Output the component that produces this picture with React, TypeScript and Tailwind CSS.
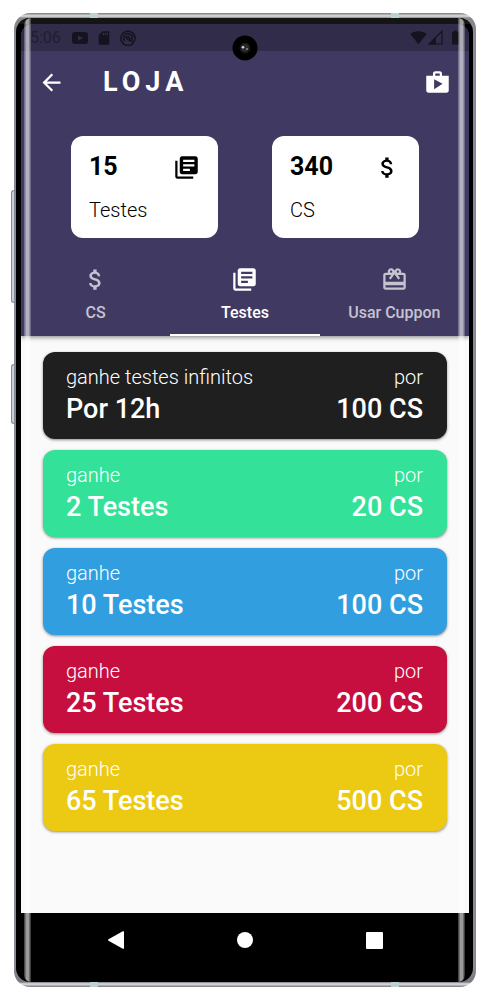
import React from "react";
import {
  MdArrowBack,
  MdAttachMoney,
  MdBatteryFull,
  MdCardGiftcard,
  MdLibraryBooks,
  MdSdCard,
  MdShop,
  MdSignalWifi4Bar,
} from "react-icons/md";

type Offer = { label: string; title: string; price: string; color: string };

const offers: Offer[] = [
  { label: "ganhe testes infinitos", title: "Por 12h", price: "100 CS", color: "bg-[#1f1f1f]" },
  { label: "ganhe", title: "2 Testes", price: "20 CS", color: "bg-[#33e198]" },
  { label: "ganhe", title: "10 Testes", price: "100 CS", color: "bg-[#319edf]" },
  { label: "ganhe", title: "25 Testes", price: "200 CS", color: "bg-[#c60f3f]" },
  { label: "ganhe", title: "65 Testes", price: "500 CS", color: "bg-[#ecc913]" },
];

function StatusBar() {
  return (
    <div className="flex h-[27px] items-center justify-between bg-[#302c49] pl-[9px] pr-[5px] text-[#15131f]">
      <div className="flex items-center">
        <span className="text-base leading-none text-[#211e31]">5:06</span>
        <svg className="ml-[11px] h-3 w-4" viewBox="0 0 16 12" aria-hidden="true">
          <rect width="16" height="12" rx="3" fill="currentColor" />
          <path d="M6 3.5 11 6 6 8.5z" fill="#302c49" />
        </svg>
        <MdSdCard className="ml-2 size-4" />
        <svg className="ml-2 size-4" viewBox="0 0 16 16" fill="none" stroke="currentColor" aria-hidden="true">
          <path d="M13.2 13.2A7.1 7.1 0 1 1 15.1 8c0 1.600-.5 3-1.300 4" strokeWidth="1.500" />
          <path d="M4.900 11A4.300 4.300 0 1 1 12 9.500" strokeWidth="1.500" />
          <path d="M5.500 7.500 8 6.500l5.500 6.500M5.500 7.500l5 4" strokeWidth="1.500" />
        </svg>
      </div>
      <div className="flex items-center">
        <MdSignalWifi4Bar className="size-[17px]" />
        <svg className="ml-px size-[15px]" viewBox="0 0 15 15" aria-hidden="true">
          <path d="M14 1v13H1z" fill="none" stroke="currentColor" strokeWidth="1.200" />
          <path d="M8 7v7.500H.5z" fill="currentColor" />
        </svg>
        <MdBatteryFull className="ml-1 size-[17px]" />
      </div>
    </div>
  );
}

function Stat({ value, label, icon }: { value: string; label: string; icon: React.ReactNode }) {
  return (
    <div className="flex h-[102px] flex-1 flex-col justify-between rounded-xl bg-white px-[18px] pb-4 pt-[17px] text-black">
      <div className="flex items-center justify-between">
        <strong className="text-[25px] font-bold leading-7">{value}</strong>
        {icon}
      </div>
      <span className="text-xl font-light leading-6">{label}</span>
    </div>
  );
}

function Tab({ label, icon, active = false }: { label: string; icon: React.ReactNode; active?: boolean }) {
  return (
    <button
      type="button"
      role="tab"
      aria-selected={active}
      className={
        active
          ? "flex flex-col items-center gap-[10px] border-b-2 border-white pb-[11px] pt-3 text-white"
          : "flex flex-col items-center gap-[10px] border-b-2 border-transparent pb-[11px] pt-3 text-[#c5c3cf]"
      }
    >
      {icon}
      <span className="whitespace-nowrap text-base font-medium leading-5">{label}</span>
    </button>
  );
}

function OfferCard({ label, title, price, color }: Offer) {
  return (
    <button
      type="button"
      className={`flex h-[87px] w-full items-start justify-between rounded-xl pl-[23px] pr-6 pt-3 text-white shadow-[0_1px_3px_rgba(0,0,0,0.45)] ${color}`}
    >
      <span className="flex flex-col items-start">
        <span className="text-xl font-light leading-[26px]">{label}</span>
        <span className="text-[27px] font-medium leading-[38px]">{title}</span>
      </span>
      <span className="flex flex-col items-end">
        <span className="text-xl font-light leading-[26px]">por</span>
        <span className="text-[27px] font-medium leading-[38px]">{price}</span>
      </span>
    </button>
  );
}

function Camera() {
  return (
    <svg className="absolute left-1/2 top-[22px] size-[26px] -translate-x-1/2" viewBox="0 0 26 26" aria-hidden="true">
      <circle cx="13" cy="13" r="12.500" fill="#000" />
      <circle cx="13" cy="13" r="5.500" fill="#141414" />
      <circle cx="13" cy="13" r="4" fill="#2a2a2a" />
      <circle cx="11" cy="12.300" r="1.300" fill="#d4d4d4" />
      <circle cx="15" cy="14" r="1" fill="#8a8a8a" />
    </svg>
  );
}

export default function App() {
  return (
    <main className="flex min-h-screen flex-col bg-white py-[13px] pl-[14px] pr-[11px] font-['Roboto',sans-serif]">
      <div className="relative flex grow flex-col rounded-2xl bg-[linear-gradient(to_bottom,#77797c_0px,#e2e2e2_3px,#85878b_5px,#858a94_20px,#858a94_calc(100%-20px),#777a80_calc(100%-5px),#e4e5e7_calc(100%-3px),#73767c_100%)] py-[5px] pl-[2px] pr-[3px]">
        <div className="absolute left-[-3px] top-[177px] h-[113px] w-[3px] rounded-l-sm border border-r-0 border-[#85898e] bg-[#c8d0d5]" />
        <div className="absolute left-[-3px] top-[351px] h-[60px] w-[3px] rounded-l-sm border border-r-0 border-[#85898e] bg-[#c8d0d5]" />
        <div className="absolute left-[76px] top-0 h-[5px] w-2 bg-[#bdd0d3]" />
        <div className="absolute right-[77px] top-0 h-[5px] w-2 bg-[#bdd0d3]" />
        <div className="absolute bottom-0 left-[76px] h-[5px] w-2 bg-[#bdd0d3]" />
        <div className="absolute bottom-0 right-[77px] h-[5px] w-2 bg-[#bdd0d3]" />

        <div className="flex grow flex-col overflow-hidden rounded-[14px] bg-black pl-[5px] pr-1">
          <div className="-ml-[5px] -mr-1 h-[6px] bg-[#151515]" />
          <div className="flex grow flex-col overflow-hidden rounded-t-xl">
            <header className="relative bg-[#403a63] shadow-[0_1px_5px_rgba(0,0,0,0.5)]">
              <StatusBar />
              <div className="flex h-[62px] items-center pl-[17px] pr-[18px] text-white">
                <button type="button" aria-label="Voltar">
                  <MdArrowBack className="size-[27px]" />
                </button>
                <h1 className="ml-[38px] grow text-[27px] font-bold leading-8 tracking-[5px]">LOJA</h1>
                <button type="button" aria-label="Compras">
                  <MdShop className="size-[27px]" />
                </button>
              </div>
              <section className="flex gap-[54px] px-[50px] pt-[23px]">
                <Stat value="15" label="Testes" icon={<MdLibraryBooks className="size-[27px]" />} />
                <Stat value="340" label="CS" icon={<MdAttachMoney className="size-[27px]" />} />
              </section>
              <div role="tablist" className="grid grid-cols-3 pt-4">
                <Tab label="CS" icon={<MdAttachMoney className="size-[27px]" />} />
                <Tab label="Testes" icon={<MdLibraryBooks className="size-[27px]" />} active />
                <Tab label="Usar Cuppon" icon={<MdCardGiftcard className="size-[27px]" />} />
              </div>
            </header>
            <section className="flex grow flex-col gap-[11px] bg-[#fafafa] px-[22px] pt-4">
              {offers.map((offer) => (
                <OfferCard key={offer.title} {...offer} />
              ))}
            </section>
          </div>
          <nav className="flex h-[69px] items-center justify-center gap-[113px] pb-[15px] text-white">
            <button type="button" aria-label="Voltar">
              <svg className="h-[18px] w-4" viewBox="0 0 16 18" fill="currentColor" aria-hidden="true">
                <path d="M.5 8.300 14.800.3q1.200-.5 1.200.7v16q0 1.200-1.200.7L.5 9.700q-.8-.7 0-1.400z" />
              </svg>
            </button>
            <button type="button" aria-label="Início" className="size-4 rounded-full bg-white" />
            <button type="button" aria-label="Recentes" className="size-[17px] rounded-[1px] bg-white" />
          </nav>
        </div>

        <div className="pointer-events-none absolute bottom-[5px] left-[10px] top-[5px] w-[7px] rounded-tl-lg rounded-bl-lg bg-[linear-gradient(to_right,rgba(255,255,255,0.2),rgba(255,255,255,0.6)_35%,rgba(255,255,255,0.6)_65%,rgba(255,255,255,0.15))]" />
        <div className="pointer-events-none absolute bottom-[5px] right-[11px] top-[5px] w-[7px] rounded-tr-lg rounded-br-lg bg-[linear-gradient(to_right,rgba(255,255,255,0.2),rgba(255,255,255,0.6)_35%,rgba(255,255,255,0.6)_65%,rgba(255,255,255,0.15))]" />
        <Camera />
      </div>
    </main>
  );
}
